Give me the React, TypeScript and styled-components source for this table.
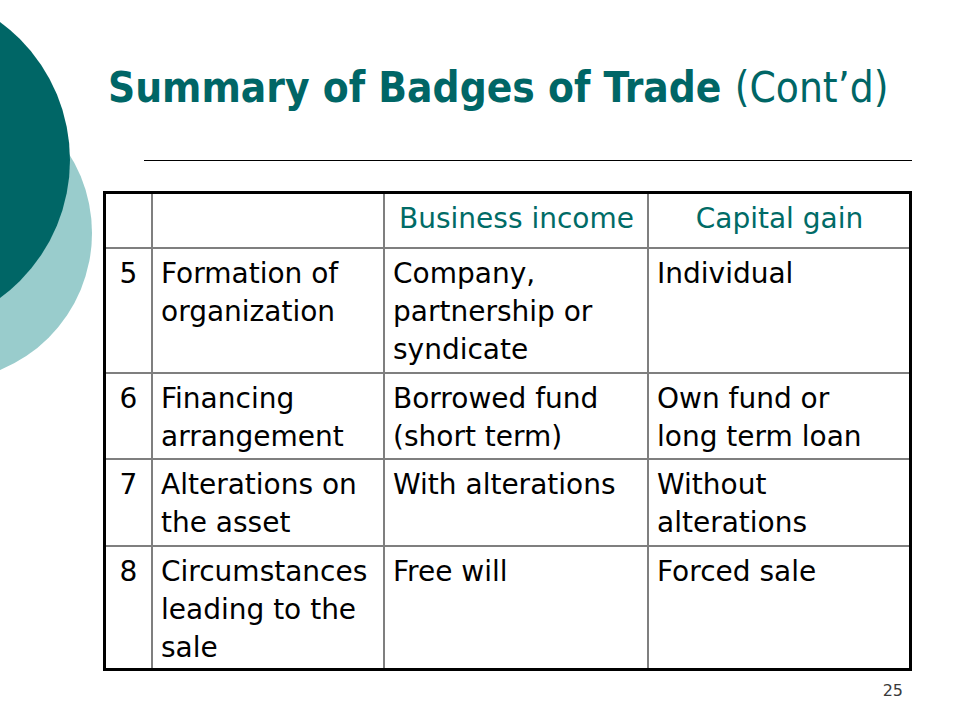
import React from "react";
import styled, { createGlobalStyle } from "styled-components";

const GlobalStyle = createGlobalStyle`
  html, body {
    margin: 0;
    padding: 0;
    background: #ffffff;
  }
  body {
    font-family: "DejaVu Sans", "Liberation Sans", sans-serif;
  }
`;

const Slide = styled.div`
  position: relative;
  width: 960px;
  height: 720px;
  overflow: hidden;
  background: #ffffff;
`;

const Decoration = styled.svg`
  position: absolute;
  left: 0;
  top: 0;
  width: 200px;
  height: 420px;
`;

const Content = styled.div`
  position: relative;
  display: flex;
  flex-direction: column;
  align-items: flex-start;
  padding-top: 63px;
`;

const Title = styled.h1`
  margin: 0 0 0 108px;
  font-family: "DejaVu Sans Condensed", "DejaVu Sans", sans-serif;
  font-stretch: condensed;
  font-size: 42px;
  line-height: 50px;
  font-weight: bold;
  color: #006666;
  white-space: nowrap;
`;

const TitleLight = styled.span`
  font-weight: normal;
`;

const Rule = styled.div`
  margin: 47px 0 0 144px;
  width: 768px;
  height: 1px;
  background: #000000;
`;

const Table = styled.div`
  margin: 30px 0 0 103px;
  display: grid;
  grid-template-columns: 45px 230px 262px 260px;
  grid-template-rows: 53px 123px 84px 85px 121px;
  gap: 2px;
  background: #7f7f7f;
  border: 3px solid #000000;
  box-sizing: content-box;
`;

const Cell = styled.div<{ $align?: "left" | "center"; $head?: boolean }>`
  background: #ffffff;
  padding: 6px 7px 0 8px;
  font-family: "DejaVu Sans", "Liberation Sans", sans-serif;
  font-size: 28px;
  line-height: 38px;
  color: ${(p) => (p.$head ? "#006B66" : "#000000")};
  text-align: ${(p) => p.$align ?? "left"};
  white-space: nowrap;
  overflow: hidden;
`;

const NumberCell = styled(Cell)`
  padding-left: 0;
  padding-right: 0;
  text-align: center;
`;

const PageNumber = styled.div`
  align-self: flex-end;
  margin: 10px 57px 0 0;
  font-family: "DejaVu Sans", sans-serif;
  font-size: 16px;
  line-height: 20px;
  color: #3a3a3a;
`;

type Row = { n: string; badge: string[]; business: string[]; capital: string[] };

const rows: Row[] = [
  {
    n: "5",
    badge: ["Formation of", "organization"],
    business: ["Company,", "partnership or", "syndicate"],
    capital: ["Individual"],
  },
  {
    n: "6",
    badge: ["Financing", "arrangement"],
    business: ["Borrowed fund", "(short term)"],
    capital: ["Own fund or", "long term loan"],
  },
  {
    n: "7",
    badge: ["Alterations on", "the asset"],
    business: ["With alterations"],
    capital: ["Without", "alterations"],
  },
  {
    n: "8",
    badge: ["Circumstances", "leading to the", "sale"],
    business: ["Free will"],
    capital: ["Forced sale"],
  },
];

const Lines: React.FC<{ lines: string[] }> = ({ lines }) => (
  <>
    {lines.map((l, i) => (
      <React.Fragment key={i}>
        {i > 0 && <br />}
        {l}
      </React.Fragment>
    ))}
  </>
);

export default function App() {
  return (
    <>
      <GlobalStyle />
      <Slide>
        <Decoration viewBox="0 0 200 420" aria-hidden="true">
          <circle cx={-56} cy={233} r={148} fill="#99CCCC" />
          <circle cx={-101} cy={160} r={171} fill="#006666" />
        </Decoration>
        <Content>
          <Title>
            Summary of Badges of Trade <TitleLight>(Cont’d)</TitleLight>
          </Title>
          <Rule />
          <Table>
            <NumberCell />
            <Cell />
            <Cell $head $align="center">Business income</Cell>
            <Cell $head $align="center">Capital gain</Cell>
            {rows.map((r) => (
              <React.Fragment key={r.n}>
                <NumberCell>{r.n}</NumberCell>
                <Cell>
                  <Lines lines={r.badge} />
                </Cell>
                <Cell>
                  <Lines lines={r.business} />
                </Cell>
                <Cell>
                  <Lines lines={r.capital} />
                </Cell>
              </React.Fragment>
            ))}
          </Table>
          <PageNumber>25</PageNumber>
        </Content>
      </Slide>
    </>
  );
}
